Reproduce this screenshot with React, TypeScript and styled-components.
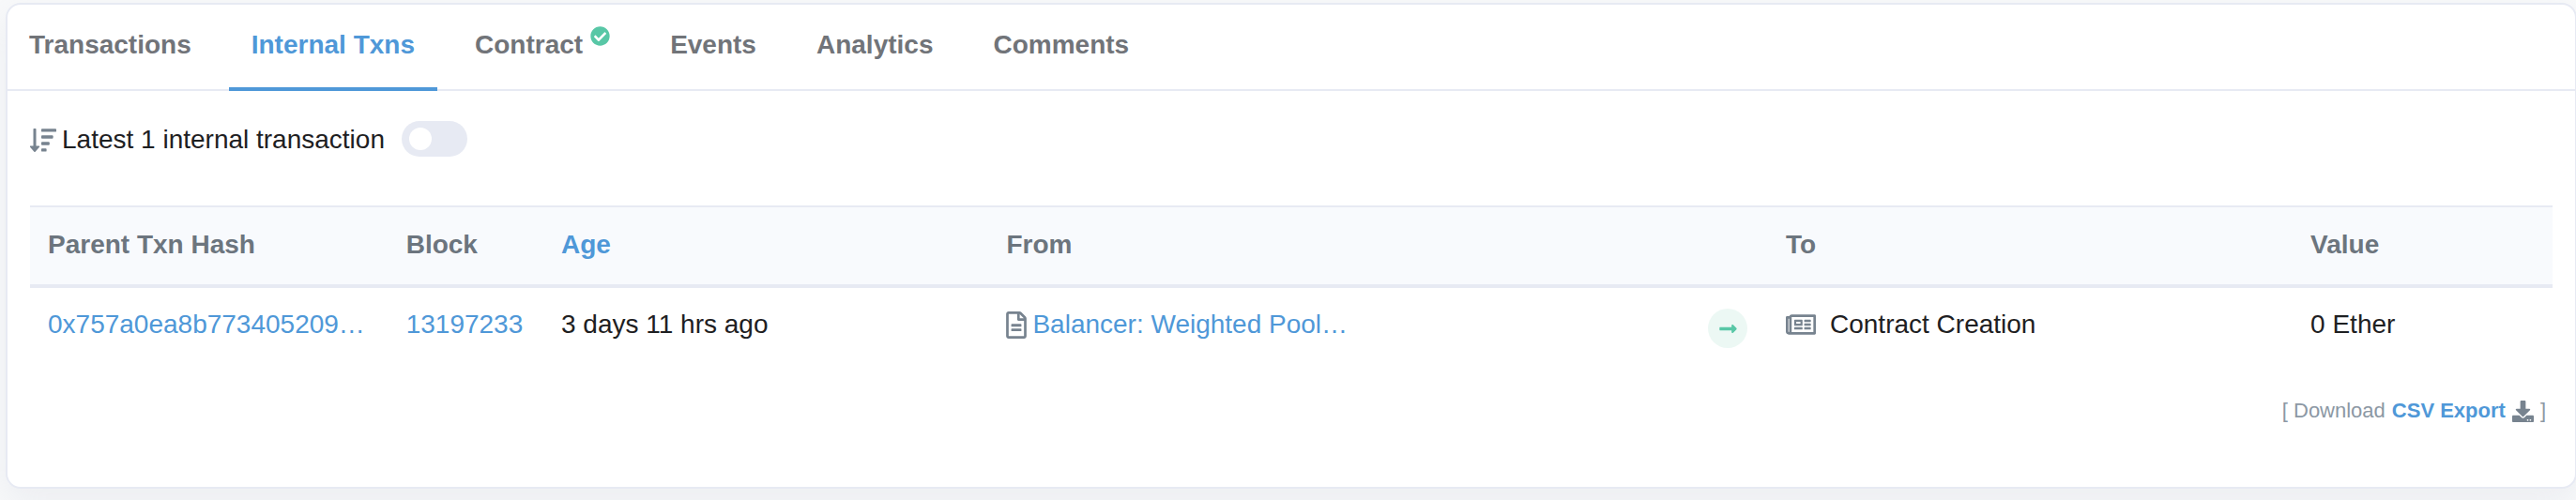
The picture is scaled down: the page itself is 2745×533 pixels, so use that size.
import React from "react";
import styled, { createGlobalStyle } from "styled-components";
import {
  FaCheckCircle,
  FaRegFileAlt,
  FaRegNewspaper,
  FaLongArrowAltRight,
  FaDownload,
} from "react-icons/fa";

const colors = {
  page: "#f8f9fa",
  border: "#e7eaf3",
  link: "#4f98d8",
  heading: "#717479",
  tableHeading: "#6c757e",
  text: "#1e2022",
  muted: "#8c98a4",
  icon: "#77838f",
  success: "#58c7a6",
};

const GlobalStyle = createGlobalStyle`
  *, *::before, *::after { box-sizing: border-box; }
  html { height: 100%; }
  body {
    margin: 0;
    min-height: 100%;
    background: ${colors.page};
    color: ${colors.text};
    font-family: "Liberation Sans", Arial, sans-serif;
    font-size: 28px;
    line-height: 42px;
    overflow-x: hidden;
  }
  svg { display: block; flex: none; }
`;

const Page = styled.main`
  margin-right: -1px;
  padding: 3px 0 12px 6px;
`;

const Card = styled.section`
  background: #fff;
  border: 2px solid ${colors.border};
  border-radius: 16px;
  box-shadow: 0 16px 38px rgba(189, 197, 209, 0.2);
`;

const Tabs = styled.nav`
  display: flex;
  gap: 16px;
  height: 92px;
  margin-left: -1px;
  border-bottom: 2px solid ${colors.border};
`;

const Tab = styled.a<{ $active?: boolean }>`
  display: flex;
  gap: 8px;
  height: 92px;
  padding: 22px 24px 0;
  border-bottom: 4px solid ${(p) => (p.$active ? colors.link : "transparent")};
  color: ${(p) => (p.$active ? colors.link : colors.heading)};
  font-weight: 700;
  text-decoration: none;
  white-space: nowrap;
`;

const Verified = styled(FaCheckCircle)`
  margin-top: 1px;
  color: ${colors.success};
`;

const Body = styled.div`
  padding: 32px 24px 64px;
`;

const Summary = styled.div`
  display: flex;
  align-items: center;
  gap: 6px;
  height: 38px;
  margin-bottom: 52px;
`;

const SortGlyph = styled.svg`
  width: 28px;
  height: 26px;
  margin-top: 4px;
  fill: ${colors.icon};
`;

const SummaryLabel = styled.label`
  margin-right: 12px;
  padding-top: 2px;
`;

const Toggle = styled.input`
  appearance: none;
  display: flex;
  align-items: center;
  width: 70px;
  height: 38px;
  margin: 0;
  padding: 0 8px;
  border-radius: 19px;
  background: ${colors.border};
  cursor: pointer;

  &::before {
    content: "";
    width: 24px;
    height: 24px;
    border-radius: 50%;
    background: #fff;
  }
  &:checked {
    justify-content: flex-end;
    background: ${colors.link};
  }
`;

const Table = styled.table`
  width: 100%;
  table-layout: fixed;
  border-collapse: separate;
  border-spacing: 0;
  text-align: left;
`;

const Col = styled.col<{ $share: number }>`
  width: ${(p) => p.$share}%;
`;

const HeadCell = styled.th`
  height: 88px;
  padding: 0 19px 2px;
  background: #f8fafd;
  border-top: 2px solid ${colors.border};
  border-bottom: 4px solid ${colors.border};
  color: ${colors.tableHeading};
  font-weight: 700;
`;

const Cell = styled.td`
  height: 82px;
  padding: 18px 19px 0;
  vertical-align: top;
  white-space: nowrap;
`;

const Line = styled.div<{ $gap: number }>`
  display: flex;
  align-items: center;
  gap: ${(p) => p.$gap}px;
  svg { color: ${colors.icon}; }
`;

const FileIcon = styled(FaRegFileAlt)`
  width: 22px;
  height: 29px;
`;

const Link = styled.a`
  color: ${colors.link};
  text-decoration: none;
`;

const Direction = styled.span`
  display: flex;
  align-items: center;
  justify-content: center;
  width: 42px;
  height: 42px;
  margin-top: 4px;
  border-radius: 50%;
  background: #ecf8f4;
  color: ${colors.success};
`;

const Download = styled.p`
  display: flex;
  align-items: center;
  justify-content: flex-end;
  gap: 7px;
  margin: 32px 0 0;
  padding-right: 7px;
  color: ${colors.muted};
  font-size: 22px;
  line-height: 34px;
  svg { color: ${colors.icon}; }
`;

const ExportLink = styled(Link)`
  font-weight: 700;
`;

const SortIcon = () => (
  <SortGlyph viewBox="0 0 28 26" aria-hidden="true">
    <rect x="3.5" y="0" width="3" height="20" rx="0.8" />
    <path d="M0.6 18.5h8.8c.8 0 1.1.8.6 1.3l-4.4 5c-.3.4-.9.4-1.2 0l-4.4-5c-.5-.5-.2-1.3.6-1.3z" />
    <rect x="12" y="0.2" width="16" height="3.4" rx="0.9" />
    <rect x="12" y="7.3" width="12.6" height="3.4" rx="0.9" />
    <rect x="12" y="14.3" width="8.8" height="3.4" rx="0.9" />
    <rect x="12" y="21.2" width="5.6" height="3.4" rx="0.9" />
  </SortGlyph>
);

const tabs = [
  { label: "Transactions" },
  { label: "Internal Txns", active: true },
  { label: "Contract", verified: true },
  { label: "Events" },
  { label: "Analytics" },
  { label: "Comments" },
];

const columnShares = [14.2, 6.15, 17.65, 27.83, 3.07, 20.8, 10.3];

export default function App() {
  return (
    <>
      <GlobalStyle />
      <Page>
        <Card>
          <Tabs>
            {tabs.map((t) => (
              <Tab key={t.label} href="#" $active={t.active}>
                {t.label}
                {t.verified && <Verified size={21} />}
              </Tab>
            ))}
          </Tabs>
          <Body>
            <Summary>
              <SortIcon />
              <SummaryLabel htmlFor="advanced">Latest 1 internal transaction</SummaryLabel>
              <Toggle id="advanced" type="checkbox" />
            </Summary>
            <Table>
              <colgroup>
                {columnShares.map((share, i) => (
                  <Col key={i} $share={share} />
                ))}
              </colgroup>
              <thead>
                <tr>
                  <HeadCell>Parent Txn Hash</HeadCell>
                  <HeadCell>Block</HeadCell>
                  <HeadCell>
                    <Link href="#">Age</Link>
                  </HeadCell>
                  <HeadCell>From</HeadCell>
                  <HeadCell />
                  <HeadCell>To</HeadCell>
                  <HeadCell>Value</HeadCell>
                </tr>
              </thead>
              <tbody>
                <tr>
                  <Cell>
                    <Link href="#">0x757a0ea8b773405209…</Link>
                  </Cell>
                  <Cell>
                    <Link href="#">13197233</Link>
                  </Cell>
                  <Cell>3 days 11 hrs ago</Cell>
                  <Cell>
                    <Line $gap={6}>
                      <FileIcon />
                      <Link href="#">Balancer: Weighted Pool…</Link>
                    </Line>
                  </Cell>
                  <Cell>
                    <Direction>
                      <FaLongArrowAltRight size={21} />
                    </Direction>
                  </Cell>
                  <Cell>
                    <Line $gap={15}>
                      <FaRegNewspaper size={32} />
                      Contract Creation
                    </Line>
                  </Cell>
                  <Cell>0 Ether</Cell>
                </tr>
              </tbody>
            </Table>
            <Download>
              <span>[ Download</span>
              <ExportLink href="#">CSV Export</ExportLink>
              <FaDownload size={23} />
              <span>]</span>
            </Download>
          </Body>
        </Card>
      </Page>
    </>
  );
}
